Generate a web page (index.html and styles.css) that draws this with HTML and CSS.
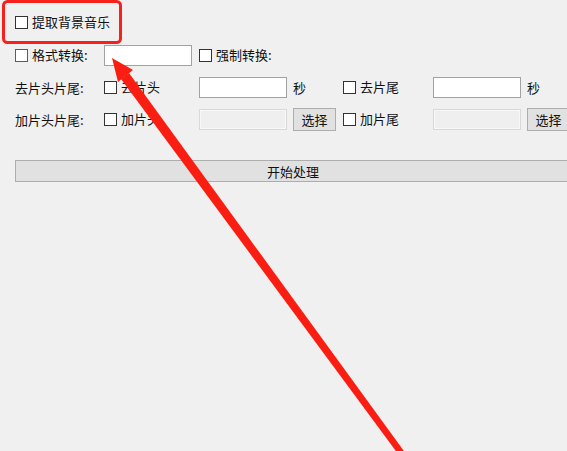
FILE: index.html
```html
<!DOCTYPE html>
<html lang="zh-CN">
<head>
  <meta charset="UTF-8" />
  <title>视频处理</title>
  <link rel="stylesheet" href="styles.css">
</head>
<body>
  <div class="window">

    <div class="top-row">
      <label class="check-item"><span class="box"></span>提取背景音乐</label>
    </div>

    <div class="form-grid">
      <!-- 格式转换 -->
      <label class="check-item"><span class="box focus"></span>格式转换:</label>
      <span class="field"><span class="text-input"></span></span>
      <label class="check-item span-rest"><span class="box"></span>强制转换:</label>

      <!-- 去片头片尾 -->
      <span class="label">去片头片尾:</span>
      <label class="check-item"><span class="box"></span>去片头</label>
      <span class="field"><span class="text-input"></span></span>
      <span class="unit">秒</span>
      <label class="check-item"><span class="box"></span>去片尾</label>
      <span class="field"><span class="text-input"></span></span>
      <span class="unit">秒</span>

      <!-- 加片头片尾 -->
      <span class="label">加片头片尾:</span>
      <label class="check-item"><span class="box"></span>加片头</label>
      <span class="field"><span class="text-input disabled"></span></span>
      <span><button class="small-btn">选择</button></span>
      <label class="check-item"><span class="box"></span>加片尾</label>
      <span class="field"><span class="text-input disabled"></span></span>
      <span><button class="small-btn">选择</button></span>
    </div>

    <button class="start-btn">开始处理</button>

    <!-- 标注 -->
    <svg class="marks" width="567" height="451" viewBox="0 0 567 451">
      <rect x="3.5" y="1.5" width="117" height="41" rx="4" fill="none" stroke="#f8201a" stroke-width="3"/>
      <polygon fill="#fa1e12" points="112,58 133,70 118,82"/>
      <polygon fill="#fa1e12" points="129,73 121,79 404,462 409,458"/>
    </svg>
  </div>
</body>
</html>
```

FILE: styles.css
```css
body {
  margin: 0;
  background-color: #f0f0f0;
  font-family: "Noto Sans CJK SC", "Microsoft YaHei", sans-serif;
  font-size: 13px;
  color: #111;
  overflow: hidden;
}

.window {
  position: relative;
  width: 567px;
  height: 451px;
  overflow: hidden;
}

.top-row {
  padding: 13px 0 0 15px;
  height: 18px;
}

.check-item {
  display: flex;
  align-items: center;
  white-space: nowrap;
  line-height: 18px;
}

.box {
  width: 11px;
  height: 11px;
  border: 1px solid #333;
  background-color: #fff;
  margin-right: 4px;
  flex-shrink: 0;
}

.box.focus {
  border-color: #0a6fd0;
}

.form-grid {
  display: grid;
  grid-template-columns: 89px 95px 94px 50px 90px 94px 60px;
  grid-auto-rows: 22px;
  row-gap: 10px;
  align-items: center;
  margin: 13px 0 0 15px;
}

.span-rest {
  grid-column: 3 / 8;
}

.label,
.unit {
  white-space: nowrap;
}

.field {
  display: flex;
}

.text-input {
  display: block;
  width: 86px;
  height: 19px;
  border: 1px solid #a2a2a2;
  background-color: #fff;
}

.text-input.disabled {
  border-color: #d8d8d8;
  background-color: #efefef;
  box-shadow: inset 0 0 0 1px #f8f8f8;
}

.small-btn {
  display: block;
  width: 43px;
  height: 23px;
  padding: 0;
  border: 1px solid #adadad;
  background-color: #e1e1e1;
  font-family: inherit;
  font-size: 13px;
  color: #111;
}

.start-btn {
  display: block;
  margin: 30px 0 0 15px;
  width: 560px;
  height: 22px;
  padding: 0 0 0 0;
  border: 1px solid #adadad;
  background-color: #e1e1e1;
  font-family: inherit;
  font-size: 13px;
  color: #111;
  text-align: left;
  text-indent: 251px;
}

.marks {
  position: absolute;
  top: 0;
  left: 0;
  pointer-events: none;
}
```
